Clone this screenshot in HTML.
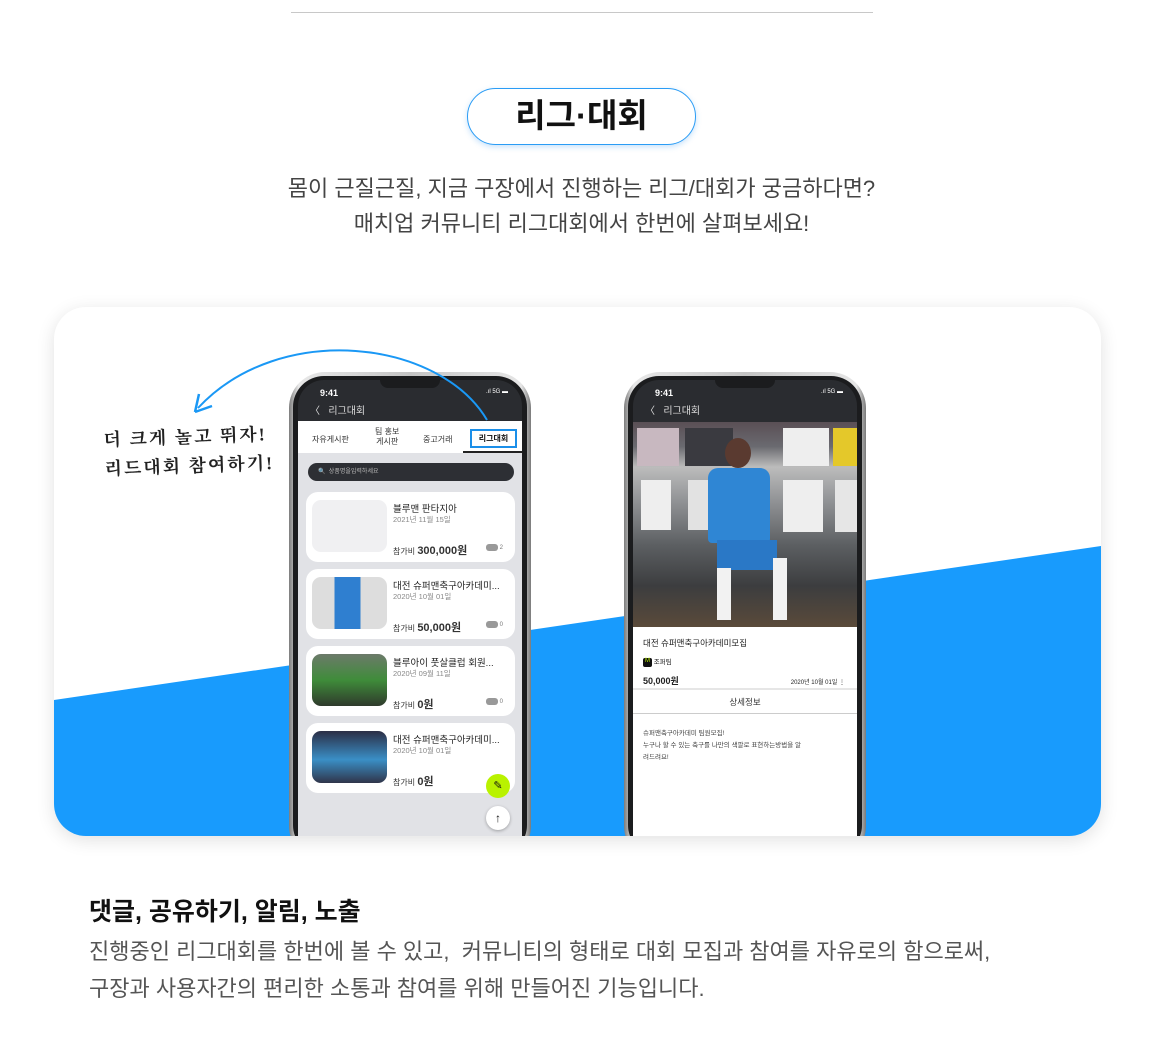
<!DOCTYPE html>
<html><head><meta charset="utf-8"><style>
*{margin:0;padding:0;box-sizing:border-box}
body{width:1155px;height:1044px;background:#fff;position:relative;overflow:hidden;font-family:"Liberation Sans","Noto Sans CJK KR",sans-serif;color:#222}
.a{position:absolute}
.t{white-space:nowrap}
.card{left:54px;top:307px;width:1047px;height:529px;border-radius:32px;background:#fff;box-shadow:0 4px 18px rgba(0,0,0,.12);overflow:hidden}
.phone{border-radius:36px;background:linear-gradient(90deg,#7d7d7d,#e8e8e8 4%,#c4c4c4 50%,#e6e6e6 96%,#7a7a7a);}
.bez{border-radius:31px;background:#1b1c1e}
.scr{background:#2a2c30;border-radius:26px 26px 0 0;overflow:hidden}
.item{left:8px;width:209px;height:70px;background:#fff;border-radius:12px}
.thumb{left:6px;top:8px;width:75px;height:52px;border-radius:9px}
.it1{left:87px;top:9px;font-size:9.5px;color:#222}
.it2{left:87px;top:22px;font-size:7.5px;color:#888}
.it3{left:87px;top:50px;font-size:8px;color:#333}
.it3 b{font-size:11px;font-weight:bold}
.cm{right:12px;top:52px;font-size:6px;color:#777}
.cm i{display:inline-block;width:12px;height:7px;background:#999;border-radius:3px;margin-right:2px;vertical-align:middle}
</style></head><body>
<div class="a" style="left:291px;top:12px;width:582px;height:1px;background:#c8c8c8"></div>
<div class="a" style="left:467px;top:88px;width:229px;height:57px;border:1.5px solid #2a9cf5;border-radius:29px;box-shadow:0 2px 6px rgba(30,140,240,.25);text-align:center;line-height:54px;font-size:33px;font-weight:bold;color:#111">리그·대회</div>
<div class="a t" style="left:0;width:1163px;top:171px;text-align:center;font-size:22px;line-height:35px;color:#444">몸이 근질근질, 지금 구장에서 진행하는 리그/대회가 궁금하다면?<br>매치업 커뮤니티 리그대회에서 한번에 살펴보세요!</div>

<div class="a card">
<svg class="a" style="left:0;top:0" width="1047" height="529"><polygon points="0,393 1047,239 1047,529 0,529" fill="#189bfd"/></svg>
<div class="a t" style="left:50px;top:116px;font-size:18px;line-height:29px;color:#222;font-weight:bold;font-family:'Liberation Serif','Noto Serif CJK SC',serif;transform:rotate(-2deg);letter-spacing:2px">더 크게 놀고 뛰자!<br>리드대회 참여하기!</div>
</div>

<div class="a" style="left:0;top:0;width:1155px;height:836px;overflow:hidden">
<!-- phone 1 -->
<div class="a phone" style="left:289px;top:372px;width:242px;height:490px"></div>
<div class="a bez" style="left:293px;top:376px;width:234px;height:480px"></div>
<div class="a scr" style="left:298px;top:380px;width:224px;height:460px">
 <div class="a t" style="left:22px;top:8px;font-size:9px;color:#fff;font-weight:bold">9:41</div>
 <div class="a t" style="right:14px;top:9px;font-size:6px;color:#fff">.ıl 5G ▬</div>
 <div class="a t" style="left:12px;top:22px;font-size:10px;color:#ddd">〈 &nbsp; 리그대회</div>
 <div class="a" style="left:0;top:41px;width:226px;height:32px;background:#fff"></div>
 <div class="a t" style="left:14px;top:54px;font-size:8px;color:#333">자유게시판</div>
 <div class="a t" style="left:77px;top:47px;font-size:8px;color:#333;text-align:center;line-height:10px">팀 홍보<br>게시판</div>
 <div class="a t" style="left:125px;top:54px;font-size:8px;color:#333">중고거래</div>
 <div class="a" style="left:165px;top:71px;width:61px;height:2px;background:#222"></div>
 <div class="a t" style="left:172px;top:49px;width:47px;height:19px;border:2px solid #1b8fe9;font-size:8px;font-weight:bold;text-align:center;line-height:15px;color:#111">리그대회</div>
 <div class="a" style="left:0;top:73px;width:226px;height:400px;background:#e1e2e6"></div>
 <div class="a t" style="left:10px;top:83px;width:206px;height:18px;background:#2d2f34;border-radius:9px;color:#bbb;font-size:6px;line-height:18px;padding-left:10px">🔍&nbsp; 상품명을입력하세요</div>
 <div class="a item" style="top:112px"><div class="a thumb" style="background:#f0f0f2"></div><div class="a it1">블루맨 판타지아</div><div class="a it2">2021년 11월 15일</div><div class="a it3">참가비 <b>300,000원</b></div><div class="a cm"><i></i>2</div></div>
 <div class="a item" style="top:189px"><div class="a thumb" style="background:linear-gradient(90deg,#ddd 0 30%,#2f7fd0 30% 65%,#ddd 65%);"></div><div class="a it1">대전 슈퍼맨축구아카데미...</div><div class="a it2">2020년 10월 01일</div><div class="a it3">참가비 <b>50,000원</b></div><div class="a cm"><i></i>0</div></div>
 <div class="a item" style="top:266px"><div class="a thumb" style="background:linear-gradient(180deg,#6c7a6a,#3f8c3a 50%,#2f3a2c)"></div><div class="a it1">블루아이 풋살클럽 회원...</div><div class="a it2">2020년 09월 11일</div><div class="a it3">참가비 <b>0원</b></div><div class="a cm"><i></i>0</div></div>
 <div class="a item" style="top:343px"><div class="a thumb" style="background:linear-gradient(180deg,#2b2e45,#3a8fc6 55%,#30354a)"></div><div class="a it1">대전 슈퍼맨축구아카데미...</div><div class="a it2">2020년 10월 01일</div><div class="a it3">참가비 <b>0원</b></div></div>
 <div class="a" style="left:188px;top:394px;width:24px;height:24px;border-radius:50%;background:#b9f200;color:#111;font-size:11px;text-align:center;line-height:24px">✎</div>
 <div class="a" style="left:188px;top:426px;width:24px;height:24px;border-radius:50%;background:#fff;box-shadow:0 1px 3px rgba(0,0,0,.3);color:#111;font-size:12px;font-weight:bold;text-align:center;line-height:24px">↑</div>
</div>
<div class="a" style="left:380px;top:376px;width:60px;height:12px;background:#1b1c1e;border-radius:0 0 8px 8px"></div>

<!-- phone 2 -->
<div class="a phone" style="left:624px;top:372px;width:242px;height:490px"></div>
<div class="a bez" style="left:628px;top:376px;width:234px;height:480px"></div>
<div class="a scr" style="left:633px;top:380px;width:224px;height:460px">
 <div class="a t" style="left:22px;top:8px;font-size:9px;color:#fff;font-weight:bold">9:41</div>
 <div class="a t" style="right:14px;top:9px;font-size:6px;color:#fff">.ıl 5G ▬</div>
 <div class="a t" style="left:12px;top:22px;font-size:10px;color:#ddd">〈 &nbsp; 리그대회</div>
 <div class="a" style="left:0;top:42px;width:224px;height:205px;background:linear-gradient(180deg,#5a4f55 0,#6a6a70 12%,#bcbcbc 22%,#8d8f92 40%,#5c5f62 60%,#3c3d3f 80%,#5a4a3a 100%)"></div>
 <div class="a" style="left:4px;top:48px;width:42px;height:38px;background:#c8b8c0"></div>
 <div class="a" style="left:52px;top:48px;width:48px;height:38px;background:#3a3a40"></div>
 <div class="a" style="left:150px;top:48px;width:46px;height:38px;background:#eee"></div>
 <div class="a" style="left:200px;top:48px;width:26px;height:38px;background:#e4c82a"></div>
 <div class="a" style="left:8px;top:100px;width:30px;height:50px;background:#eee"></div>
 <div class="a" style="left:55px;top:100px;width:28px;height:50px;background:#e2e2e2"></div>
 <div class="a" style="left:150px;top:100px;width:40px;height:52px;background:#eee"></div>
 <div class="a" style="left:202px;top:100px;width:24px;height:52px;background:#e6e6e6"></div>
 <div class="a" style="left:92px;top:58px;width:26px;height:30px;border-radius:50%;background:#5a3a30"></div>
 <div class="a" style="left:75px;top:88px;width:62px;height:75px;background:#2f86d4;border-radius:10px 10px 4px 4px"></div>
 <div class="a" style="left:84px;top:160px;width:60px;height:30px;background:#2a78c6"></div>
 <div class="a" style="left:84px;top:188px;width:14px;height:52px;background:#f2f2f2"></div>
 <div class="a" style="left:140px;top:178px;width:14px;height:62px;background:#f2f2f2"></div>
 <div class="a" style="left:0;top:247px;width:224px;height:220px;background:#fff"></div>
 <div class="a t" style="left:10px;top:257px;font-size:8.5px;color:#222">대전 슈퍼맨축구아카데미모집</div>
 <div class="a t" style="left:10px;top:276px;font-size:6.5px;color:#222"><span style="display:inline-block;width:9px;height:9px;background:#111;border-radius:2px;color:#b9f200;font-size:6px;text-align:center;vertical-align:middle">M</span> 조퍼팀</div>
 <div class="a t" style="left:10px;top:294px;font-size:9px;color:#222;font-weight:bold">50,000원</div>
 <div class="a t" style="right:12px;top:297px;font-size:6px;color:#222">2020년 10월 01일 ⋮</div>
 <div class="a" style="left:0;top:308px;width:224px;height:2px;background:#e6e6e6"></div>
 <div class="a t" style="left:0;width:224px;top:316px;text-align:center;font-size:8.5px;color:#333">상세정보</div>
 <div class="a" style="left:0;top:333px;width:224px;height:1px;background:#ccc"></div>
 <div class="a t" style="left:10px;top:348px;font-size:6.5px;line-height:12px;color:#444">슈퍼맨축구아카데미 팀원모집!<br>누구나 할 수 있는 축구를 나만의 색깔로 표현하는방법을 알<br>려드려요!</div>
</div>
<div class="a" style="left:715px;top:376px;width:60px;height:12px;background:#1b1c1e;border-radius:0 0 8px 8px"></div>
</div>

<svg class="a" style="left:0;top:0" width="600" height="450"><path d="M487,420 C440,340 280,320 198,408" fill="none" stroke="#1a98f5" stroke-width="2"/><path d="M195,412 L199,394 M195,412 L212,406" stroke="#1a98f5" stroke-width="2.5" fill="none"/></svg>

<div class="a t" style="left:89px;top:892px;font-size:25px;font-weight:bold;color:#111">댓글, 공유하기, 알림, 노출</div>
<div class="a t" style="left:89px;top:933px;font-size:22px;line-height:37px;color:#555">진행중인 리그대회를 한번에 볼 수 있고,&nbsp; 커뮤니티의 형태로 대회 모집과 참여를 자유로의 함으로써,<br>구장과 사용자간의 편리한 소통과 참여를 위해 만들어진 기능입니다.</div>
</body></html>
